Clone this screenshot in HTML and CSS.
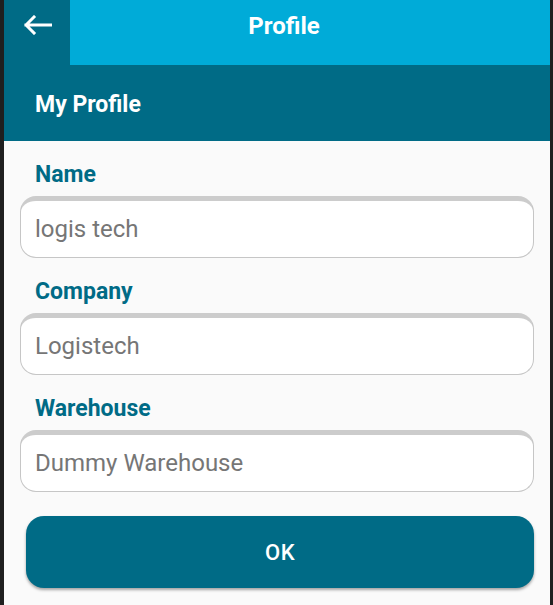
FILE: index.html
```html
<!DOCTYPE html>
<html>
<head>
<meta charset="utf-8">
<link rel="stylesheet" href="styles.css">
</head>
<body>
<div class="app">
  <header class="topbar">
    <div class="back">
      <svg width="28" height="20" viewBox="0 0 28 20">
        <path d="M2 10 H27 M10 2 L2 10 L10 18" fill="none" stroke="#fff" stroke-width="3" stroke-linecap="square"/>
      </svg>
    </div>
    <div class="title">Profile</div>
  </header>
  <div class="section">My Profile</div>
  <main class="form">
    <div class="field">
      <div class="label">Name</div>
      <div class="box">logis tech</div>
    </div>
    <div class="field">
      <div class="label">Company</div>
      <div class="box">Logistech</div>
    </div>
    <div class="field">
      <div class="label">Warehouse</div>
      <div class="box">Dummy Warehouse</div>
    </div>
    <button class="ok">OK</button>
  </main>
</div>
</body>
</html>
```
FILE: styles.css
```css
html, body {
  margin: 0;
  padding: 0;
  background: #1f1f1f;
  font-family: Roboto, "Liberation Sans", sans-serif;
}
.app {
  margin-left: 4px;
  width: 546px;
  height: 605px;
  background: #fafafa;
  overflow: hidden;
}
.topbar {
  display: flex;
  height: 65px;
}
.back {
  width: 46px;
  padding-left: 20px;
  padding-top: 15px;
  background: #006b86;
  box-sizing: content-box;
}
.back svg { display: block; }
.title {
  flex: 1;
  background: #00abd8;
  color: #fff;
  font-weight: 700;
  font-size: 24px;
  line-height: 24px;
  padding-top: 14px;
  padding-right: 52px;
  text-align: center;
}
.section {
  height: 76px;
  background: #006b86;
  color: #fff;
  font-weight: 700;
  font-size: 23px;
  line-height: 80px;
  padding-left: 31px;
  box-sizing: border-box;
}
.form {
  padding: 21px 16px 0 16px;
  display: flex;
  flex-direction: column;
}
.field {
  display: flex;
  flex-direction: column;
  margin-bottom: 21px;
}
.field:last-of-type { margin-bottom: 0; }
.label {
  color: #006b86;
  font-weight: 700;
  font-size: 23px;
  line-height: 26px;
  padding-left: 15px;
  margin-bottom: 8px;
}
.box {
  height: 62px;
  box-sizing: border-box;
  background: #fff;
  border: 1.5px solid #c6c6c6;
  border-top: 5px solid #cccccc;
  border-radius: 16px;
  display: flex;
  align-items: center;
  padding-left: 14px;
  padding-bottom: 1px;
  color: #767676;
  font-size: 24px;
}
.ok {
  margin: 24px 0 0 6px;
  height: 72px;
  border: none;
  border-radius: 18px;
  background: #006b86;
  color: #fff;
  font-family: Roboto, "Liberation Sans", sans-serif;
  font-weight: 500;
  font-size: 22px;
  letter-spacing: 0.5px;
  box-shadow: 0 2px 3px rgba(0,0,0,0.35);
}
```
